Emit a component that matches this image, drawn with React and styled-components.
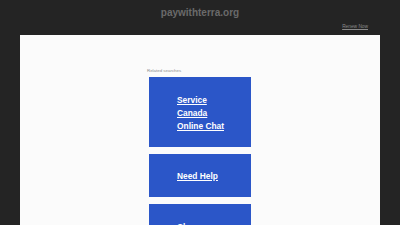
import React from "react";
import styled, { createGlobalStyle } from "styled-components";

const GlobalStyle = createGlobalStyle`
  html, body {
    margin: 0;
    padding: 0;
    background: #242424;
    font-family: "Liberation Sans", Arial, sans-serif;
    overflow: hidden;
  }
`;

const searches = [
  { lines: ["Service", "Canada", "Online Chat"], height: 70 },
  { lines: ["Need Help"], height: 43 },
  { lines: ["Chase", "Online", "Banking"], height: 70 },
];

const App = () => {
  return (
    <Page>
      <GlobalStyle />
      <Header>
        <Domain>paywithterra.org</Domain>
        <RenewRow>
          <RenewLink href="#">Renew Now</RenewLink>
        </RenewRow>
      </Header>
      <Panel>
        <Results>
          <RelatedLabel>Related searches</RelatedLabel>
          {searches.map((s, i) => (
            <AdBlock key={i} $height={s.height}>
              <LinkGroup>
                {s.lines.map((line) => (
                  <SearchLink key={line} href="#">
                    {line}
                  </SearchLink>
                ))}
              </LinkGroup>
            </AdBlock>
          ))}
        </Results>
      </Panel>
    </Page>
  );
};

const Page = styled.div`
  width: 400px;
  height: 225px;
  display: flex;
  flex-direction: column;
  align-items: center;
  overflow: hidden;
`;

const Header = styled.div`
  width: 360px;
  display: flex;
  flex-direction: column;
  align-items: center;
  padding-top: 7px;
`;

const Domain = styled.div`
  font-size: 10px;
  font-weight: 700;
  color: #6a6a6a;
  line-height: 12px;
`;

const RenewRow = styled.div`
  width: 100%;
  display: flex;
  justify-content: flex-end;
  padding-right: 12px;
  box-sizing: border-box;
  margin-top: 4px;
  height: 12px;
`;

const RenewLink = styled.a`
  font-size: 4.8px;
  color: #8a8a8a;
  text-decoration: underline;
  line-height: 8px;
`;

const Panel = styled.div`
  width: 360px;
  flex: 1;
  background: #fbfbfb;
  display: flex;
  justify-content: center;
`;

const Results = styled.div`
  width: 105px;
  padding-top: 33px;
  margin-left: -3px;
  display: flex;
  flex-direction: column;
`;

const RelatedLabel = styled.div`
  font-size: 4.4px;
  color: #8d8d8d;
  line-height: 6px;
  margin-bottom: 3px;
  padding-left: 1px;
`;

const AdBlock = styled.div`
  height: ${(p) => p.$height}px;
  width: 102px;
  margin-left: 3px;
  margin-bottom: 7px;
  background: #2b56c8;
  display: flex;
  align-items: center;
  padding-left: 28px;
  padding-top: 2px;
  box-sizing: border-box;
  flex-shrink: 0;
`;

const LinkGroup = styled.div`
  display: flex;
  flex-direction: column;
`;

const SearchLink = styled.a`
  color: #ffffff;
  font-size: 8.4px;
  font-weight: 700;
  line-height: 13px;
  text-decoration: underline;
`;

export default App;
